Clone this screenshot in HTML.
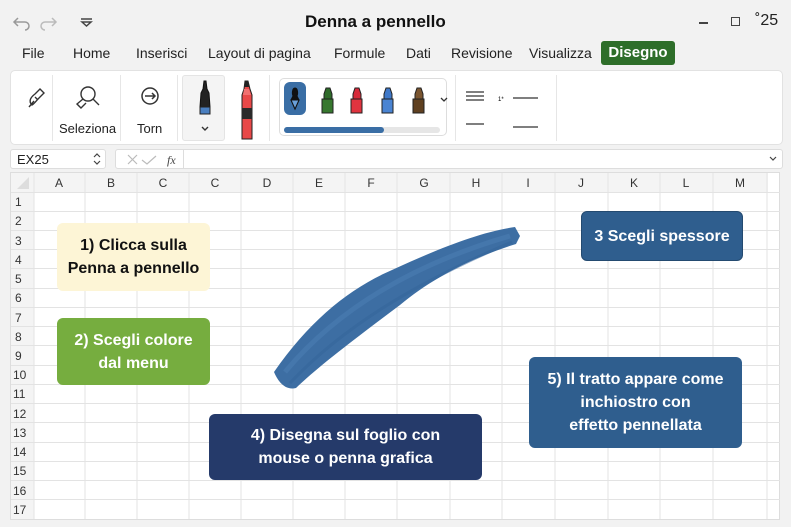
<!DOCTYPE html>
<html><head><meta charset="utf-8"><style>
*{margin:0;padding:0;box-sizing:border-box}
body{width:791px;height:527px;background:#f2f2f2;font-family:"Liberation Sans",sans-serif;position:relative;overflow:hidden;color:#222}
.a{position:absolute}
.menu span{position:absolute;top:45px;font-size:14px;color:#222}
.rib{left:10px;top:70px;width:773px;height:75px;background:#fff;border:1px solid #e2e2e2;border-radius:5px}
.sep{position:absolute;top:4px;width:1px;height:66px;background:#e6e6e6}
.lbl{position:absolute;font-size:13px;color:#222}
.grid{left:10px;top:172px;width:770px;height:348px;background:#fff;border:1px solid #ddd}
.call{position:absolute;border-radius:6px;text-align:center;font-weight:bold;display:flex;align-items:center;justify-content:center;line-height:23px;font-size:16px}
</style></head><body>
<svg class="a" style="left:12px;top:13px" width="90" height="20"><path d="M6 5 L2 9 L6 13 M2 9 H13 A4 4 0 0 1 13 17" fill="none" stroke="#999" stroke-width="1.5"/><path d="M40 5 L44 9 L40 13 M44 9 H33 A4 4 0 0 0 33 17" fill="none" stroke="#bbb" stroke-width="1.5"/><path d="M69 6 H80 M70 9 L74.5 13 L79 9 Z" fill="none" stroke="#444" stroke-width="1.5"/></svg>
<div class="a" style="left:305px;top:12px;font-size:17px;font-weight:bold;color:#111">Denna a pennello</div>
<div class="a" style="left:699px;top:22px;width:9px;height:1.5px;background:#444"></div>
<div class="a" style="left:731px;top:17px;width:9px;height:9px;border:1.5px solid #444"></div>
<div class="a" style="left:755px;top:12px;font-size:16px;color:#222">˚25</div>
<div class="menu">
<span style="left:22px">File</span><span style="left:73px">Home</span><span style="left:136px">Inserisci</span><span style="left:208px">Layout di pagina</span><span style="left:334px">Formule</span><span style="left:406px">Dati</span><span style="left:451px">Revisione</span><span style="left:529px">Visualizza</span>
</div>
<div class="a" style="left:601px;top:41px;width:74px;height:24px;background:#2e6e2a;border-radius:3px;color:#fff;font-weight:bold;font-size:15px;text-align:center;line-height:24px">Disegno</div>
<div class="a rib">
<div class="sep" style="left:41px"></div><div class="sep" style="left:109px"></div><div class="sep" style="left:166px"></div><div class="sep" style="left:258px"></div><div class="sep" style="left:444px"></div><div class="sep" style="left:545px"></div>
<svg class="a" style="left:14px;top:14px" width="22" height="26"><path d="M4 22 L9 16 M7 20 C3 16 6 12 10 9 L15 4 L19 8 L14 13 C11 16 9 19 7 20 Z M10 12 L13 15" fill="none" stroke="#333" stroke-width="1.4"/></svg>
<svg class="a" style="left:62px;top:13px" width="28" height="26"><circle cx="15" cy="10" r="7" fill="none" stroke="#333" stroke-width="1.4"/><path d="M20 15 L26 21 M10 15 L4 20 L8 24 L13 19" fill="none" stroke="#333" stroke-width="1.4"/></svg>
<div class="lbl" style="left:48px;top:50px">Seleziona</div>
<svg class="a" style="left:129px;top:15px" width="22" height="22"><circle cx="10" cy="10" r="8" fill="none" stroke="#333" stroke-width="1.5"/><path d="M5 10 H15 M12 7 L15 10 L12 13" fill="none" stroke="#333" stroke-width="1.5"/></svg>
<div class="lbl" style="left:126px;top:50px">Torn</div>
<div class="a" style="left:171px;top:4px;width:43px;height:66px;background:#f4f4f4;border:1px solid #e4e4e4;border-radius:3px"></div>
<svg class="a" style="left:183px;top:8px" width="22" height="60"><path d="M10 2 L12 2 L13 10 L15 14 L16 28 L6 28 L7 14 L9 10 Z" fill="#222" stroke="#111"/><rect x="6" y="28" width="10" height="7" fill="#4a7fc0" stroke="#222"/><path d="M8 48 L11 51 L14 48" fill="none" stroke="#333" stroke-width="1.4"/></svg>
<svg class="a" style="left:225px;top:8px" width="22" height="62"><path d="M9 2 L12 2 L14 10 L16 16 L16 60 L6 60 L6 16 L8 10 Z" fill="#e84848" stroke="#222"/><path d="M9 2 L12 2 L13 8 L8 8Z" fill="#222"/><rect x="6" y="29" width="10" height="11" fill="#2a2a2a"/><path d="M8 10 L13 10 L15 16 L7 16 Z" fill="#f07070"/></svg>
<div class="a" style="left:268px;top:7px;width:168px;height:58px;border:1px solid #ddd;border-radius:5px"></div>
<div class="a" style="left:273px;top:11px;width:22px;height:33px;background:#3a6ea5;border-radius:6px"></div>
<svg class="a" style="left:273px;top:11px" width="170" height="34"><path d="M11 6 C8 6 8 12 9 14 L7 18 L11 27 L15 18 L13 14 C14 12 14 6 11 6Z" fill="#111" stroke="#111"/><path d="M7 18 L15 18 L11 27 Z" fill="#6aa0d8" stroke="#111"/>
<g stroke="#222" stroke-width="1"><path d="M42 6 L46 6 L48 12 L48 17 L40 17 L40 12 Z" fill="#2f6b2a"/><rect x="38" y="17" width="11" height="14" fill="#37782f"/>
<path d="M71 6 L75 6 L77 12 L77 17 L69 17 L69 12 Z" fill="#d62a3a"/><rect x="67" y="17" width="11" height="14" fill="#e0343f"/>
<path d="M102 6 L106 6 L108 12 L108 17 L100 17 L100 12 Z" fill="#3f78c8"/><rect x="98" y="17" width="11" height="14" fill="#4a84d2"/>
<path d="M133 6 L137 6 L139 12 L139 17 L131 17 L131 12 Z" fill="#7a5530"/><rect x="129" y="17" width="11" height="14" fill="#5f4020"/></g>
<path d="M157 16 L160 19 L163 16" fill="none" stroke="#333" stroke-width="1.3"/></svg>
<div class="a" style="left:273px;top:56px;width:156px;height:6px;background:#e6e6e6;border-radius:3px"></div>
<div class="a" style="left:273px;top:56px;width:100px;height:6px;background:#3a6ea5;border-radius:3px"></div>
<svg class="a" style="left:455px;top:18px" width="80" height="44"><path d="M0 3 H18 M0 7 H18 M0 11 H18 M0 35 H18 M47 9 H72 M47 38 H72" stroke="#333" stroke-width="1.2"/><text x="32" y="12" font-size="6" font-family="Liberation Sans">1*</text></svg>
</div>
<div class="a" style="left:10px;top:149px;width:96px;height:20px;background:#fff;border:1px solid #ddd;border-radius:3px;font-size:13px;padding:2px 6px">EX25</div>
<svg class="a" style="left:92px;top:152px" width="10" height="14"><path d="M2 5 L5 2 L8 5 M2 9 L5 12 L8 9" fill="none" stroke="#444" stroke-width="1.2"/></svg>
<div class="a" style="left:115px;top:149px;width:668px;height:20px;background:#fff;border:1px solid #ddd;border-radius:3px"></div>
<svg class="a" style="left:125px;top:153px" width="60" height="14"><path d="M3 2 L12 11 M12 2 L3 11 M17 7 L22 11 L31 3" fill="none" stroke="#bbb" stroke-width="1.2"/><text x="42" y="11" font-size="12" font-style="italic" font-family="Liberation Serif" fill="#444">fx</text></svg>
<div class="a" style="left:183px;top:150px;width:1px;height:18px;background:#ddd"></div>
<svg class="a" style="left:769px;top:155px" width="10" height="8"><path d="M1 2 L4 5 L7 2" fill="none" stroke="#444" stroke-width="1.2"/></svg>
<div class="a grid"></div>
<svg class="a" style="left:0;top:0" width="791" height="527">
<rect x="11" y="173" width="757" height="19" fill="#f4f4f4"/>
<rect x="11" y="173" width="23" height="346" fill="#f4f4f4"/>
<path d="M17 189 L29 177 L29 189Z" fill="#ddd"/>
<g stroke="#e3e3e3" stroke-width="1">
<path d="M34 173V519M85 173V519M137 173V519M189 173V519M241 173V519M293 173V519M345 173V519M397 173V519M450 173V519M502 173V519M555 173V519M608 173V519M660 173V519M713 173V519M767 173V519"/>
<path d="M11 192.5H780M11 211.5H780M11 230.5H780M11 249.5H780M11 268.5H780M11 288.5H780M11 307.5H780M11 326.5H780M11 345.5H780M11 365.5H780M11 384.5H780M11 403.5H780M11 422.5H780M11 442.5H780M11 461.5H780M11 480.5H780M11 499.5H780"/>
</g>
<g font-family="Liberation Sans" font-size="12" fill="#333" text-anchor="middle">
<text x="59" y="187">A</text><text x="111" y="187">B</text><text x="163" y="187">C</text><text x="215" y="187">C</text><text x="267" y="187">D</text><text x="319" y="187">E</text><text x="371" y="187">F</text><text x="424" y="187">G</text><text x="476" y="187">H</text><text x="528" y="187">I</text><text x="581" y="187">J</text><text x="634" y="187">K</text><text x="686" y="187">L</text><text x="740" y="187">M</text>
</g>
<g font-family="Liberation Sans" font-size="12" fill="#333">
<text x="15" y="206">1</text><text x="15" y="225">2</text><text x="15" y="245">3</text><text x="15" y="264">4</text><text x="15" y="283">5</text><text x="15" y="302">6</text><text x="15" y="322">7</text><text x="15" y="341">8</text><text x="15" y="360">9</text><text x="13" y="379">10</text><text x="13" y="398">11</text><text x="13" y="418">12</text><text x="13" y="437">13</text><text x="13" y="456">14</text><text x="13" y="475">15</text><text x="13" y="495">16</text><text x="13" y="514">17</text>
</g>
<path d="M274 372 C310 320 350 288 392 270 C440 248 480 232 515 227 L520 236 L516 244 C470 258 430 280 400 305 C360 335 320 365 296 388 C288 390 280 386 274 372 Z" fill="#3d6ea3"/>
<path d="M285 372 C330 318 400 268 510 236" stroke="#4d80b6" stroke-width="5" fill="none" opacity=".5"/>
<path d="M290 383 C340 330 410 285 512 242" stroke="#33649a" stroke-width="3" fill="none" opacity=".5"/>
</svg>
<div class="call" style="left:57px;top:223px;width:153px;height:68px;background:#fdf5d6;color:#111">1) Clicca sulla<br>Penna a pennello</div>
<div class="call" style="left:57px;top:318px;width:153px;height:67px;background:#76ad3f;color:#fff">2) Scegli colore<br>dal menu</div>
<div class="call" style="left:581px;top:211px;width:162px;height:50px;background:#2f5e8e;color:#fff;border:1px solid #244a70">3 Scegli spessore</div>
<div class="call" style="left:209px;top:414px;width:273px;height:66px;background:#253a6a;color:#fff">4) Disegna sul foglio con<br>mouse o penna grafica</div>
<div class="call" style="left:529px;top:357px;width:213px;height:91px;background:#2f5e8e;color:#fff">5) Il tratto appare come<br>inchiostro con<br>effetto pennellata</div>
</body></html>
